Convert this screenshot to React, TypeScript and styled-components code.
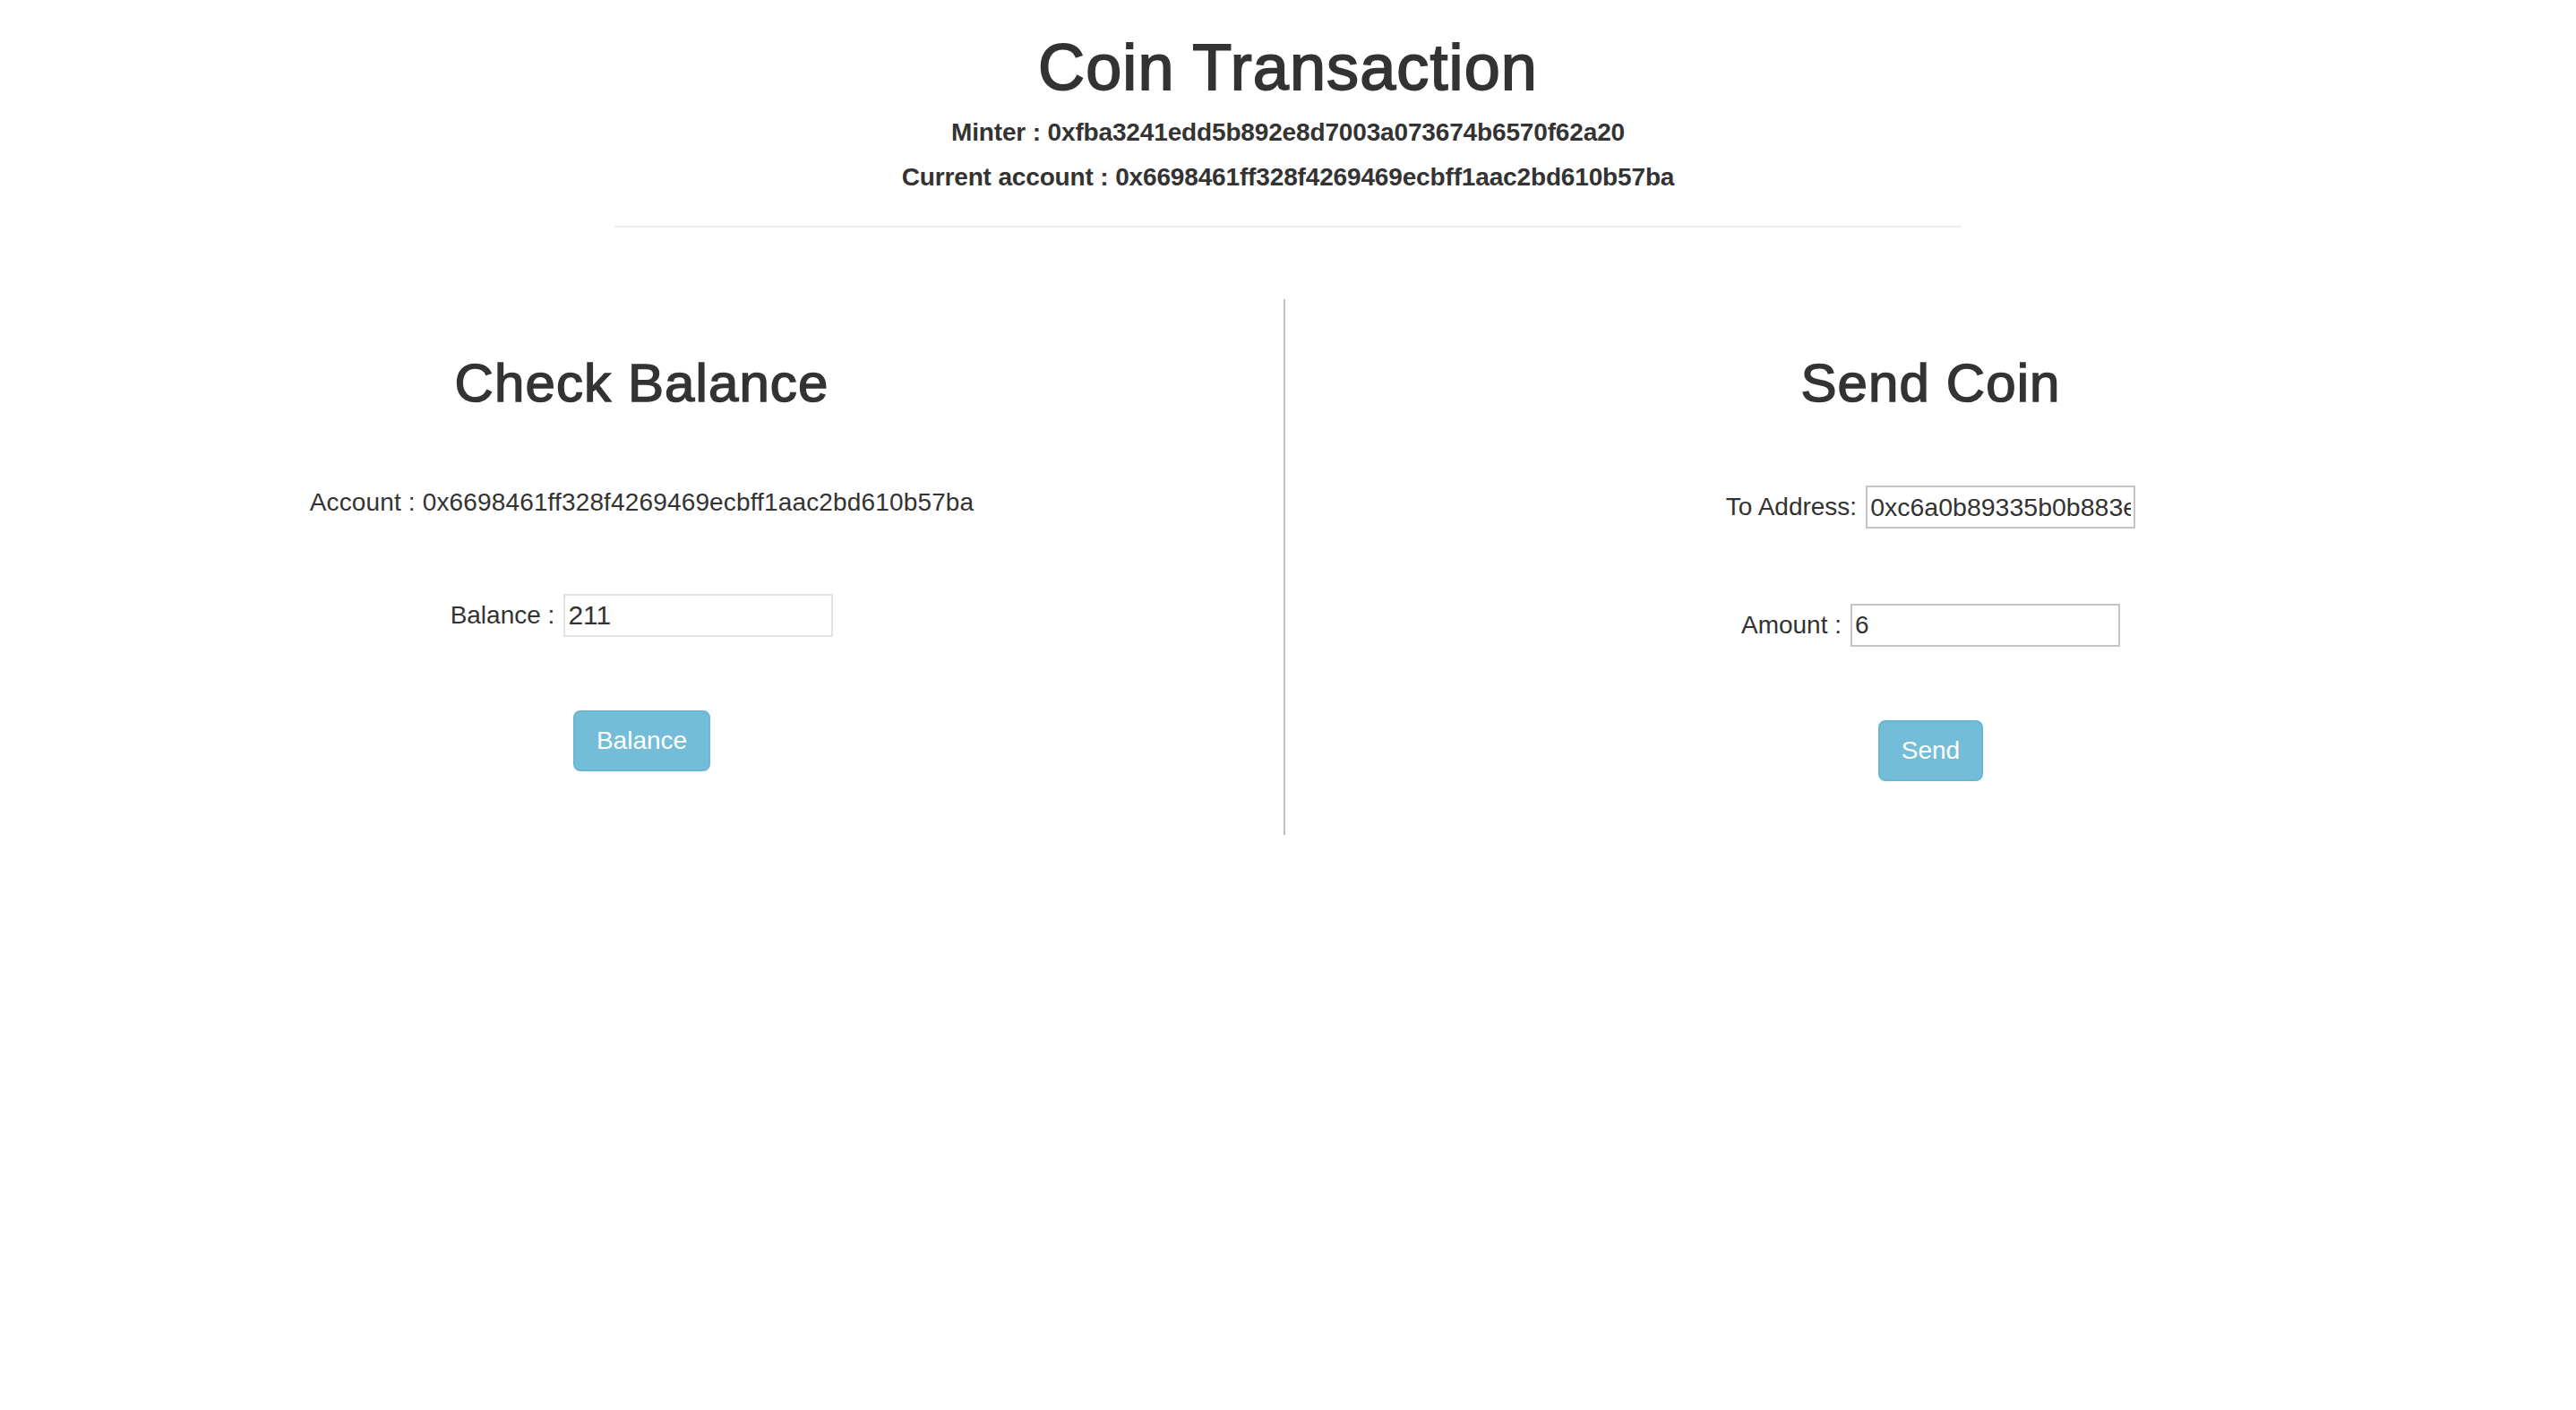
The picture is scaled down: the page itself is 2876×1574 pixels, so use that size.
import React from "react";
import styled, { createGlobalStyle } from "styled-components";

const GlobalStyle = createGlobalStyle`
  html, body {
    margin: 0;
    padding: 0;
    background: #ffffff;
  }
  body {
    font-family: "Liberation Sans", Arial, Helvetica, sans-serif;
    color: #333333;
  }
  * { box-sizing: border-box; }
`;

const Page = styled.div`
  width: 2876px;
  min-height: 1574px;
  background: #ffffff;
`;

const Header = styled.header`
  display: flex;
  flex-direction: column;
  align-items: center;
  padding-top: 35px;
`;

const Title = styled.h1`
  margin: 0;
  font-size: 72px;
  line-height: 80px;
  font-weight: 400;
  letter-spacing: 1.1px;
  -webkit-text-stroke: 1.8px #333333;
  color: #333333;
`;

const InfoLine = styled.p<{ $mt: number }>`
  margin: ${(p) => p.$mt}px 0 0;
  font-size: 28px;
  line-height: 32px;
  font-weight: 700;
  letter-spacing: -0.15px;
  color: #333333;
`;

const Rule = styled.hr`
  width: 1504px;
  margin: 38px 0 0;
  border: 0;
  border-top: 2px solid #eeeeee;
  height: 0;
`;

const Panels = styled.main`
  display: grid;
  grid-template-columns: 1433px 2px 1fr;
  align-items: start;
`;

const Panel = styled.section`
  display: flex;
  flex-direction: column;
  align-items: center;
  padding-top: 141px;
`;

const Divider = styled.div`
  width: 2px;
  height: 598px;
  margin-top: 80px;
  background: #c0c0c0;
`;

const PanelTitle = styled.h2`
  margin: 0;
  font-size: 60px;
  line-height: 66px;
  font-weight: 400;
  letter-spacing: 1.1px;
  -webkit-text-stroke: 1.5px #333333;
  color: #333333;
`;

const AccountText = styled.p<{ $mt: number }>`
  margin: ${(p) => p.$mt}px 0 0;
  font-size: 28px;
  line-height: 40px;
  letter-spacing: 0.15px;
  color: #333333;
`;

const FieldRow = styled.div<{ $mt: number }>`
  display: flex;
  align-items: center;
  gap: 10px;
  margin-top: ${(p) => p.$mt}px;
`;

const FieldLabel = styled.label`
  font-size: 28px;
  line-height: 40px;
  color: #333333;
  white-space: nowrap;
`;

const TextInput = styled.input<{ $light?: boolean; $size: number }>`
  width: 301px;
  height: 48px;
  padding: 0 3px;
  border: 2px solid ${(p) => (p.$light ? "#e2e2e2" : "#c4c4c4")};
  border-radius: 0;
  background: #ffffff;
  font-family: "Liberation Sans", Arial, Helvetica, sans-serif;
  font-size: ${(p) => p.$size}px;
  color: #333333;
  outline: none;
`;

const ActionButton = styled.button<{ $mt: number }>`
  margin-top: ${(p) => p.$mt}px;
  height: 68px;
  padding: 0 24px;
  border: 2px solid #69b7d6;
  border-radius: 8px;
  background: #74bdd9;
  color: #ffffff;
  font-family: "Liberation Sans", Arial, Helvetica, sans-serif;
  font-size: 28px;
  line-height: 64px;
  cursor: pointer;
`;

const MINTER = "0xfba3241edd5b892e8d7003a073674b6570f62a20";
const ACCOUNT = "0x6698461ff328f4269469ecbff1aac2bd610b57ba";

export default function App() {
  return (
    <Page>
      <GlobalStyle />
      <Header>
        <Title>Coin Transaction</Title>
        <InfoLine $mt={17}>Minter : {MINTER}</InfoLine>
        <InfoLine $mt={18}>Current account : {ACCOUNT}</InfoLine>
        <Rule />
      </Header>
      <Panels>
        <Panel>
          <PanelTitle>Check Balance</PanelTitle>
          <AccountText $mt={80}>Account : {ACCOUNT}</AccountText>
          <FieldRow $mt={82}>
            <FieldLabel htmlFor="balance">Balance :</FieldLabel>
            <TextInput id="balance" $light $size={30} defaultValue="211" readOnly />
          </FieldRow>
          <ActionButton $mt={82}>Balance</ActionButton>
        </Panel>
        <Divider />
        <Panel>
          <PanelTitle>Send Coin</PanelTitle>
          <FieldRow $mt={81}>
            <FieldLabel htmlFor="to">To Address:</FieldLabel>
            <TextInput
              id="to"
              $size={28.5}
              defaultValue="0xc6a0b89335b0b883e5a1f0c2d7e94b3a6f8d2c1e"
            />
          </FieldRow>
          <FieldRow $mt={84}>
            <FieldLabel htmlFor="amount">Amount :</FieldLabel>
            <TextInput id="amount" $size={28} defaultValue="6" />
          </FieldRow>
          <ActionButton $mt={82}>Send</ActionButton>
        </Panel>
      </Panels>
    </Page>
  );
}
